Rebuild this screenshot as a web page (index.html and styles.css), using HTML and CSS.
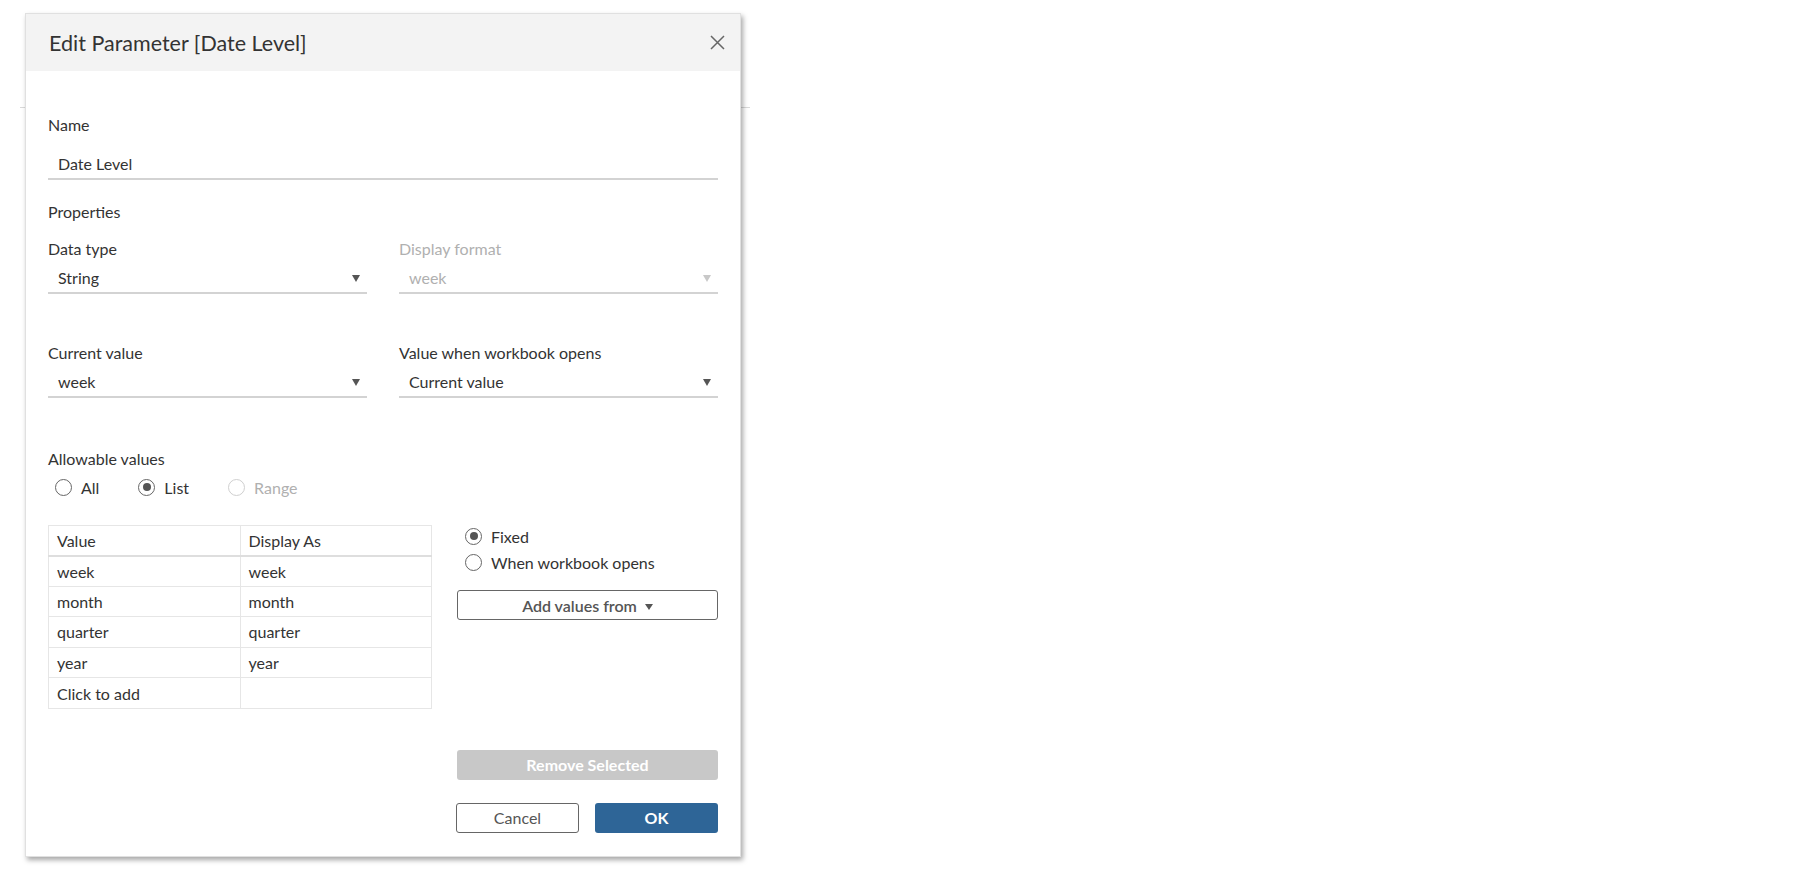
FILE: index.html
```html
<!DOCTYPE html>
<html lang="en">
<head>
    <meta charset="UTF-8">
    <meta name="viewport" content="width=device-width, initial-scale=1.0">
    <title>Edit Parameter [Date Level]</title>
    <link rel="stylesheet" href="styles.css">
</head>
<body>
    <div class="page-rule"></div>

    <div class="dialog">
        <div class="dialog-header">
            <h1>Edit Parameter [Date Level]</h1>
            <span class="close">
                <svg width="15" height="15" viewBox="0 0 15 15"><path d="M1 1 L14 14 M14 1 L1 14" stroke="#666" stroke-width="1.5" fill="none"/></svg>
            </span>
        </div>

        <div class="dialog-body">
            <div class="label">Name</div>
            <div class="text-input">Date Level</div>

            <div class="label section">Properties</div>

            <div class="row first-row">
                <div class="col">
                    <div class="label">Data type</div>
                    <div class="select">String <span class="arrow"></span></div>
                </div>
                <div class="col disabled">
                    <div class="label">Display format</div>
                    <div class="select">week <span class="arrow"></span></div>
                </div>
            </div>

            <div class="row second-row">
                <div class="col">
                    <div class="label">Current value</div>
                    <div class="select">week <span class="arrow"></span></div>
                </div>
                <div class="col">
                    <div class="label">Value when workbook opens</div>
                    <div class="select">Current value <span class="arrow"></span></div>
                </div>
            </div>

            <div class="label allowable">Allowable values</div>
            <div class="radios">
                <label class="radio"><span class="dot"></span>All</label>
                <label class="radio checked"><span class="dot"></span>List</label>
                <label class="radio disabled"><span class="dot"></span>Range</label>
            </div>

            <div class="list-area">
                <table class="values">
                    <tr class="head"><td>Value</td><td>Display As</td></tr>
                    <tr><td>week</td><td>week</td></tr>
                    <tr><td>month</td><td>month</td></tr>
                    <tr><td>quarter</td><td>quarter</td></tr>
                    <tr><td>year</td><td>year</td></tr>
                    <tr><td>Click to add</td><td></td></tr>
                </table>

                <div class="list-side">
                    <label class="radio checked"><span class="dot"></span>Fixed</label>
                    <label class="radio"><span class="dot"></span>When workbook opens</label>
                    <button class="btn outline add-btn">Add values from <span class="small-arrow"></span></button>
                </div>
            </div>

            <div class="remove-row">
                <button class="btn muted">Remove Selected</button>
            </div>

            <div class="footer">
                <button class="btn outline">Cancel</button>
                <button class="btn primary">OK</button>
            </div>
        </div>
    </div>
</body>
</html>
```

FILE: styles.css
```css
body {
    font-family: Lato, 'Liberation Sans', sans-serif;
    color: #333;
    background: #fff;
    margin: 0;
    font-size: 16px;
}
.page-rule {
    margin: 107px 0 0 20px;
    width: 730px;
    height: 1px;
    background: #d9d9d9;
}
.dialog {
    position: absolute;
    left: 25px;
    top: 13px;
    width: 716px;
    background: #fff;
    border: 1px solid #e0e0e0;
    box-sizing: border-box;
    box-shadow: 2px 3px 5px rgba(0,0,0,0.35);
}
.dialog-header {
    height: 57px;
    background: #f3f3f3;
    display: flex;
    align-items: center;
    justify-content: space-between;
    padding: 0 15px 0 23px;
}
.dialog-header h1 {
    margin: 0;
    font-size: 21.5px;
    font-weight: normal;
    color: #333;
}
.close {
    display: flex;
}
.dialog-body {
    padding: 44px 22px 23px 22px;
}
.label {
    line-height: 20px;
    height: 20px;
}
.text-input {
    margin-top: 15px;
    height: 30px;
    line-height: 28px;
    padding-left: 10px;
    border-bottom: 2px solid #d3d3d3;
    box-sizing: border-box;
}
.section {
    margin-top: 22px;
}
.row {
    display: grid;
    grid-template-columns: 1fr 1fr;
    column-gap: 32px;
}
.first-row {
    margin-top: 17px;
}
.second-row {
    margin-top: 49px;
}
.select {
    position: relative;
    margin-top: 4px;
    height: 31px;
    line-height: 29px;
    padding-left: 10px;
    border-bottom: 2px solid #d3d3d3;
    box-sizing: border-box;
}
.arrow {
    position: absolute;
    right: 7px;
    top: 12px;
    border-left: 4.5px solid transparent;
    border-right: 4.5px solid transparent;
    border-top: 7px solid #555;
}
.disabled {
    color: #b0b0b0;
}
.disabled .arrow {
    border-top-color: #c8c8c8;
}
.allowable {
    margin-top: 51px;
}
.radios {
    display: flex;
    margin-top: 8px;
    padding-left: 7px;
}
.radios .radio {
    margin-right: 39px;
}
.radio {
    display: flex;
    align-items: center;
    height: 20px;
}
.dot {
    width: 15px;
    height: 15px;
    border: 1px solid #666;
    border-radius: 50%;
    margin-right: 9px;
    position: relative;
    flex-shrink: 0;
}
.radio.checked .dot::after {
    content: '';
    position: absolute;
    left: 3.5px;
    top: 3.5px;
    width: 8px;
    height: 8px;
    border-radius: 50%;
    background: #555;
}
.radio.disabled {
    color: #b0b0b0;
}
.radio.disabled .dot {
    border-color: #cfcfcf;
}
.list-area {
    display: flex;
    margin-top: 28px;
    gap: 25px;
}
.values {
    width: 384px;
    border-collapse: collapse;
    border: 1px solid #e6e6e6;
    align-self: flex-start;
}
.values td {
    height: 30.6px;
    padding: 0 8px;
    border: 1px solid #e6e6e6;
    box-sizing: border-box;
    width: 50%;
}
.values .head td {
    border-bottom: 2px solid #dedede;
    height: 30px;
}
.list-side {
    flex: 1;
    display: flex;
    flex-direction: column;
    gap: 6px;
    padding-top: 1px;
}
.list-side .radio {
    padding-left: 8px;
}
.btn {
    font-family: inherit;
    font-size: 16px;
    height: 30px;
    border-radius: 3px;
    cursor: pointer;
    box-sizing: border-box;
}
.outline {
    background: #fff;
    border: 1px solid #666;
    color: #555;
}
.add-btn {
    margin-top: 12px;
    width: 100%;
    font-weight: 600;
}
.small-arrow {
    display: inline-block;
    margin-left: 4px;
    vertical-align: middle;
    border-left: 4px solid transparent;
    border-right: 4px solid transparent;
    border-top: 6px solid #555;
}
.remove-row {
    display: flex;
    justify-content: flex-end;
    margin-top: 41px;
}
.muted {
    width: 261px;
    background: #c8c8c8;
    border: none;
    color: #fff;
    font-weight: bold;
}
.footer {
    display: flex;
    justify-content: flex-end;
    gap: 16px;
    margin-top: 23px;
}
.footer .btn {
    width: 123px;
}
.primary {
    background: #2e6597;
    border: none;
    color: #fff;
    font-weight: bold;
}
```
